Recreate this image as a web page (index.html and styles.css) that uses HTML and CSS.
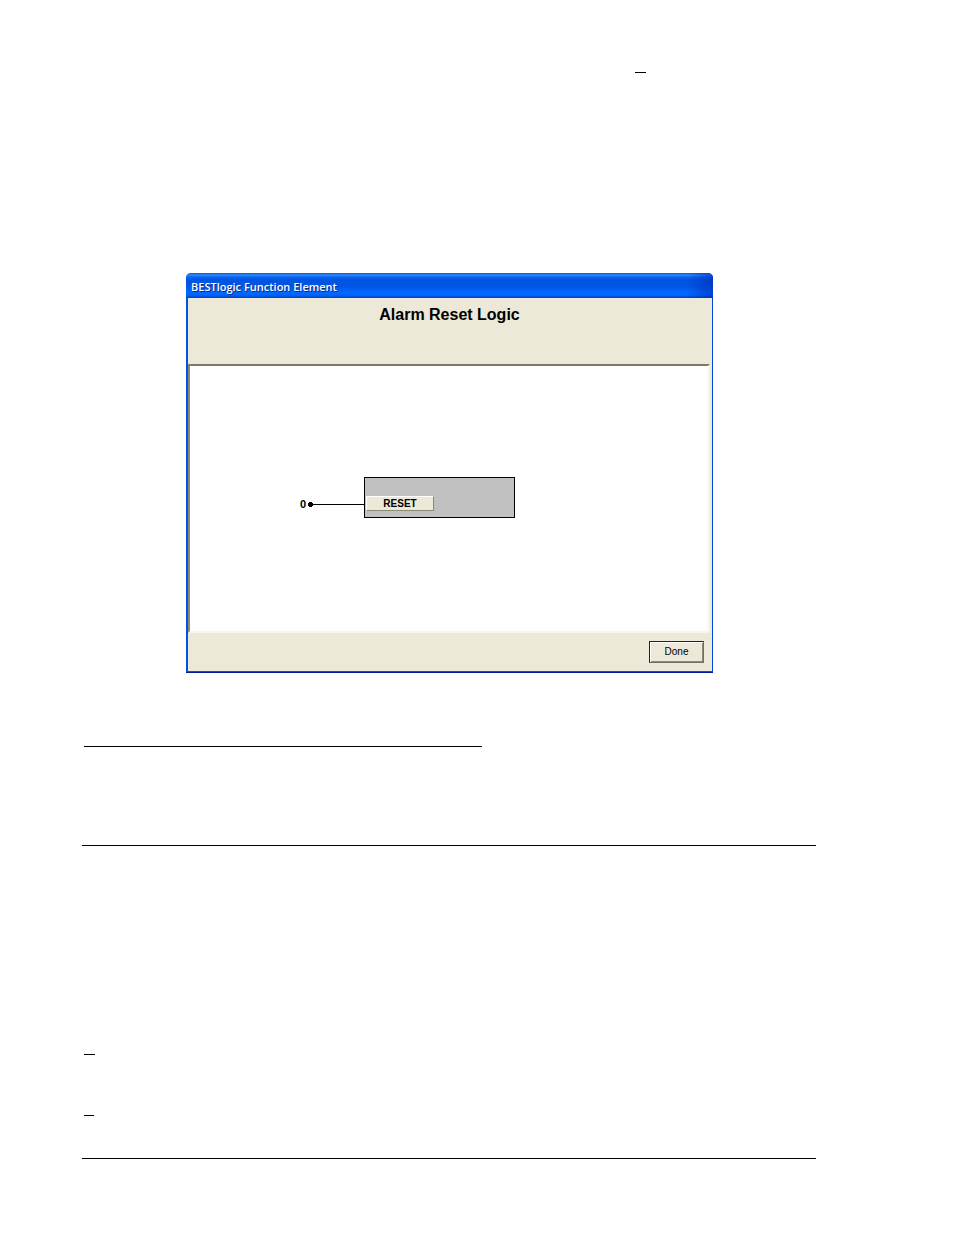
FILE: index.html
```html
<!DOCTYPE html>
<html lang="en">
<head>
<meta charset="utf-8">
<title>BESTlogic Function Element</title>
<link rel="stylesheet" href="styles.css">
</head>
<body>
<main class="page">
  <hr class="rule rule-mark-top">
  <section class="window" aria-labelledby="window-title">
    <header class="titlebar" id="window-title">BESTlogic Function Element</header>
    <div class="heading"><h1 class="heading-text">Alarm Reset Logic</h1></div>
    <div class="canvas">
      <div class="input-node">
        <span class="input-value">0</span>
        <svg class="dot" width="5" height="5" viewBox="0 0 5 5" aria-hidden="true"><path d="M1 0h3v1h1v3H4v1H1V4H0V1h1z" fill="#000"/></svg>
        <span class="wire"></span>
      </div>
      <div class="block">
        <button class="reset" type="button">RESET</button>
      </div>
    </div>
    <footer class="actions"><button class="done" type="button">Done</button></footer>
  </section>
  <hr class="rule rule-heading">
  <hr class="rule rule-section">
  <hr class="rule rule-mark">
  <hr class="rule rule-mark-small">
  <hr class="rule rule-footer">
</main>
</body>
</html>
```
FILE: styles.css
```css
* {
  box-sizing: border-box;
}

body {
  margin: 0;
  background: #fff;
  color: #000;
  font-family: "Liberation Sans", Arial, sans-serif;
}

.page {
  display: flex;
  flex-direction: column;
  padding: 72px 138px 76px 82px;
}

.rule {
  width: 100%;
  height: 1px;
  margin: 0;
  border: 0;
  background: #000;
}

.rule-mark-top {
  width: 11px;
  align-self: flex-end;
  margin-right: 170px;
}

.window {
  display: flex;
  flex-direction: column;
  min-width: 420px;
  margin: 200px 103px 0 104px;
  border-radius: 5px 5px 0 0;
  background: #ece9d8;
  box-shadow: inset 0 -1px #001ea0, inset 2px -2px #0054e3, inset -1px 0 #0046e0;
}

.titlebar {
  height: 25px;
  padding: 2px 5px 0;
  border-radius: 5px 5px 0 0;
  background:
    linear-gradient(90deg, rgba(0, 40, 180, 0) 95%, rgba(0, 40, 180, 0.6)),
    linear-gradient(#0058e0 0, #2f8bff 2px, #0a66ee 4px, #0054e0 7px, #0056e6 14px, #0068ff 19px, #0066fa 22px, #003dd0 25px);
  color: #fff;
  font: 600 11px/24px "Open Sans", "Noto Sans", sans-serif;
  text-shadow: 1px 1px #0a2a8c;
}

.heading {
  height: 66px;
  padding-top: 7px;
  text-align: center;
}

.heading-text {
  margin: 0;
  font-size: 16px;
  line-height: 20px;
}

.canvas {
  display: flex;
  align-items: flex-start;
  height: 269px;
  margin: 0 3px 0 2px;
  padding: 111px 0 0 110px;
  border: 2px solid;
  border-color: #7b7968 #f7f5ec #f7f5ec #8b8978;
  background: #fff;
}

.input-node {
  display: flex;
  align-items: center;
  width: 64px;
  height: 16px;
  margin-top: 19px;
}

.input-value {
  width: 8px;
  font-size: 11px;
  font-weight: bold;
  line-height: 16px;
}

.dot {
  flex: none;
}

.wire {
  flex: 1;
  height: 1px;
  background: #000;
}

.block {
  width: 151px;
  height: 41px;
  padding: 18px 1px 0;
  border: 1px solid #000;
  background: #c0c0c0;
}

.reset,
.done {
  display: block;
  padding: 0;
  background: #ece9d8;
  color: #000;
  font-family: inherit;
  font-size: 10px;
}

.reset {
  width: 68px;
  height: 15px;
  border: 1px solid;
  border-color: #fff #8b8978 #8b8978 #fff;
  font-weight: bold;
  line-height: 12px;
}

.actions {
  display: flex;
  justify-content: flex-end;
  padding: 8px 9px 10px;
}

.done {
  width: 55px;
  height: 22px;
  border: 1px solid;
  border-color: #222 #716f64 #716f64 #222;
  box-shadow: inset 1px 1px #fff, inset -1px -1px #8b8978;
  line-height: 18px;
}

.rule-heading {
  width: 398px;
  margin: 73px 0 0 2px;
}

.rule-section {
  margin-top: 98px;
}

.rule-mark {
  width: 11px;
  margin: 208px 0 0 2px;
}

.rule-mark-small {
  width: 10px;
  margin: 60px 0 0 2px;
}

.rule-footer {
  margin-top: 42px;
}
```
